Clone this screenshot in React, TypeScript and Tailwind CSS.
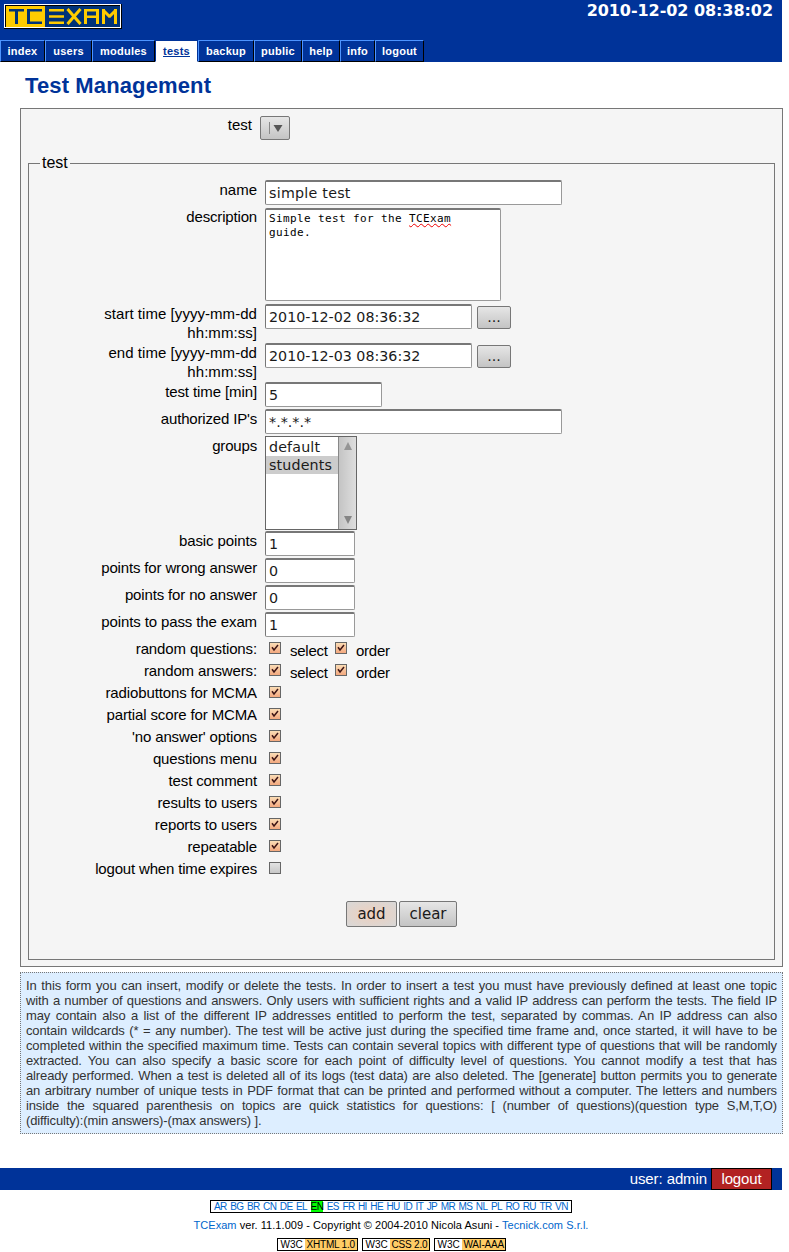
import type { ReactNode } from 'react';

const tabs = [
  { t: 'index', w: 'w-[45px]' },
  { t: 'users', w: 'w-[47px]' },
  { t: 'modules', w: 'w-[63px]' },
  { t: 'tests', w: 'w-[43px]' },
  { t: 'backup', w: 'w-[56px]' },
  { t: 'public', w: 'w-[48px]' },
  { t: 'help', w: 'w-[38px]' },
  { t: 'info', w: 'w-[35px]' },
  { t: 'logout', w: 'w-[49px]' },
];

const helpLines = [
  'In this form you can insert, modify or delete the tests. In order to insert a test you must have previously defined at least one topic',
  'with a number of questions and answers. Only users with sufficient rights and a valid IP address can perform the tests. The field IP',
  'may contain also a list of the different IP addresses entitled to perform the test, separated by commas. An IP address can also',
  'contain wildcards (* = any number). The test will be active just during the specified time frame and, once started, it will have to be',
  'completed within the specified maximum time. Tests can contain several topics with different type of questions that will be randomly',
  'extracted. You can also specify a basic score for each point of difficulty level of questions. You cannot modify a test that has',
  'already performed. When a test is deleted all of its logs (test data) are also deleted. The [generate] button permits you to generate',
  'an arbitrary number of unique tests in PDF format that can be printed and performed without a computer. The letters and numbers',
  'inside the squared parenthesis on topics are quick statistics for questions: [ (number of questions)(question type S,M,T,O)',
];

const languages = 'AR BG BR CN DE EL EN ES FR HI HE HU ID IT JP MR MS NL PL RO RU TR VN'.split(' ');

function Logo() {
  return (
    <svg width="118" height="25" viewBox="0 0 118 25" aria-label="TCExam">
      <rect width="118" height="25" fill="#000" />
      <rect width="117" height="24" fill="#fff" />
      <rect x="1" y="1" width="115" height="22" fill="#000" />
      <rect x="2" y="2" width="39" height="21" fill="#fc0" />
      <rect x="41" y="2" width="75" height="21" fill="#003278" />
      <g fill="#003278">
        <rect x="5" y="5" width="15" height="2.5" />
        <rect x="11" y="5" width="3" height="15" />
        <rect x="23" y="5" width="15" height="2.5" />
        <rect x="23" y="5" width="3" height="15" />
        <rect x="23" y="17.5" width="15" height="2.5" />
      </g>
      <g fill="#fc0">
        <rect x="45" y="5" width="15" height="2.5" />
        <rect x="45" y="11.250" width="15" height="2.5" />
        <rect x="45" y="17.5" width="15" height="2.5" />
        <rect x="80" y="5" width="15" height="2.5" />
        <rect x="80" y="5" width="3" height="15" />
        <rect x="92" y="5" width="3" height="15" />
        <rect x="80" y="11.5" width="15" height="2.5" />
        <rect x="98" y="5" width="3" height="15" />
        <rect x="110" y="5" width="3" height="15" />
      </g>
      <g stroke="#fc0" strokeWidth="3">
        <line x1="63.500" y1="5" x2="76.500" y2="20" />
        <line x1="76.500" y1="5" x2="63.500" y2="20" />
        <line x1="99" y1="6" x2="106" y2="13" />
        <line x1="112" y1="6" x2="105" y2="13" />
      </g>
    </svg>
  );
}

function Check({ on = true }: { on?: boolean }) {
  return (
    <svg width="12" height="12" viewBox="0 0 12 12" className="block shrink-0">
      <defs>
        <linearGradient id="on" x2="0" y2="1">
          <stop offset="0" stopColor="#fbdfb8" />
          <stop offset="1" stopColor="#f3a67c" />
        </linearGradient>
        <linearGradient id="off" x2="0" y2="1">
          <stop offset="0" stopColor="#e4e4e4" />
          <stop offset="1" stopColor="#c6c6c6" />
        </linearGradient>
      </defs>
      <rect x=".5" y=".5" width="11" height="11" fill={on ? 'url(#on)' : 'url(#off)'} stroke="#666" />
      {on && <polyline points="3,5.3 5,8 9,3" fill="none" stroke="#3c1414" strokeWidth="1.5" />}
    </svg>
  );
}

function Row({ label, h, tracking = 'tracking-[-0.17px]', children }: { label: ReactNode; h: string; tracking?: string; children: ReactNode }) {
  return (
    <div className={`flex gap-2 ${h}`}>
      <div className={`w-[228px] shrink-0 whitespace-nowrap text-right text-[15px] leading-[19px] ${tracking}`}>{label}</div>
      {children}
    </div>
  );
}

function Field({ value, w }: { value: string; w: string }) {
  return (
    <input
      defaultValue={value}
      className={`h-[25px] rounded-[2px] border border-[#999] border-t-2 border-t-[#777] border-l-[#777] bg-white px-[3px] font-['DejaVu_Sans',sans-serif] text-[14.25px] leading-[20px] text-[#1a1a1a] outline-none ${w}`}
    />
  );
}

function Button({ children, className }: { children: ReactNode; className: string }) {
  return (
    <button
      className={`rounded-[2px] border border-[#777] bg-linear-to-b from-[#e6e6e6] to-[#c4c4c4] font-['DejaVu_Sans',sans-serif] text-[#1a1a1a] ${className}`}
    >
      {children}
    </button>
  );
}

function CheckRow({ label, on = true, pair = false }: { label: string; on?: boolean; pair?: boolean }) {
  return (
    <Row label={label} h="h-[22px]" tracking={label.startsWith('logout') ? 'tracking-[-0.17px]' : 'tracking-[-0.13px]'}>
      <div className="flex pl-1 pt-[3px] text-[15px] leading-[17px] tracking-[-0.25px]">
        <Check on={on} />
        {pair && (
          <>
            <span className="ml-[9px] w-[45px]">select</span>
            <Check />
            <span className="ml-[9px]">order</span>
          </>
        )}
      </div>
    </Row>
  );
}

function Badge({ name, w }: { name: string; w: string }) {
  return (
    <div className={`flex h-[13px] border border-black text-[10px] leading-[12px] whitespace-nowrap ${w}`}>
      <span className="w-[27px] pl-[3px]">W3C</span>
      <span className="flex-1 bg-[#fc6] pl-[2px] tracking-[-0.2px]">{name}</span>
    </div>
  );
}

export default function App() {
  return (
    <div className="h-[1252px] w-[789px] overflow-hidden bg-white font-['Liberation_Sans',Arial,sans-serif] text-black">
      <header className="flex h-[62px] w-[782px] flex-col justify-between bg-[#039]">
        <div className="flex justify-between pl-1 pt-1">
          <Logo />
          <div className="-mt-[3px] pr-[9px] font-['DejaVu_Sans',sans-serif] text-[16px] font-bold leading-[20px] tracking-[-0.06px] text-white">
            2010-12-02 08:38:02
          </div>
        </div>
        <nav className="flex text-[11px] font-bold leading-[20px] tracking-[0.25px] text-white">
          {tabs.map(({ t, w }) => (
            <a
              key={t}
              className={`h-[22px] border text-center ${w} ${
                t === 'tests'
                  ? 'border-x-[#039] border-t-[#039] border-b-white bg-white text-[#039] underline'
                  : 'border-b-black border-l-[#4d94ff] border-r-black border-t-[#4d94ff]'
              }`}
            >
              {t}
            </a>
          ))}
        </nav>
      </header>

      <h1 className="h-[46px] pl-[25px] pt-[10px] text-[22px] font-bold leading-[27px] tracking-[0.13px] text-[#039]">Test Management</h1>

      <main className="ml-5 h-[859px] w-[763px] border border-[#777] bg-[#f5f5f5] px-[7px] pt-[6px]">
        <div className="flex h-[39px] gap-2">
          <div className="w-[224px] text-right text-[15px] leading-[19px]">test</div>
          <Button className="mt-px flex h-[24px] w-[30px] items-center pl-[8px]">
            <svg width="16" height="14">
              <path d="M.5 1v12" stroke="#888" />
              <path d="M4.500 4h9l-4.500 7z" fill="#555" />
            </svg>
          </Button>
        </div>

        <fieldset className="h-[806px] border border-[#777]">
          <legend className="ml-[11px] px-[2px] text-[16px] leading-[18px]">test</legend>
          <div className="pt-[8px]">
            <Row label="name" h="h-[27px]" tracking="tracking-normal">
              <Field value="simple test" w="w-[297px] tracking-[0.25px]" />
            </Row>
            <Row label="description" h="h-[97px]">
              <div className="mt-px h-[93px] w-[236px] rounded-[2px] border border-[#999] border-t-2 border-t-[#777] border-l-[#777] bg-white px-[3px] pt-[2px] font-['DejaVu_Sans_Mono',monospace] text-[11px] leading-[14px] tracking-[0.38px]">
                Simple test for the{' '}
                <span className="underline decoration-[#e00] decoration-wavy decoration-[1px] underline-offset-1">TCExam</span>
                <br />
                guide.
              </div>
            </Row>
            <Row label={<>start time [yyyy-mm-dd<br />hh:mm:ss]</>} h="h-[39px]" tracking="tracking-[0.05px]">
              <div className="flex gap-[5px]">
                <Field value="2010-12-02 08:36:32" w="w-[207px]" />
                <Button className="mt-[2px] h-[23px] w-[34px] text-[14.25px]">...</Button>
              </div>
            </Row>
            <Row label={<>end time [yyyy-mm-dd<br />hh:mm:ss]</>} h="h-[39px]" tracking="tracking-[0.05px]">
              <div className="flex gap-[5px]">
                <Field value="2010-12-03 08:36:32" w="w-[207px]" />
                <Button className="mt-[2px] h-[23px] w-[34px] text-[14.25px]">...</Button>
              </div>
            </Row>
            <Row label="test time [min]" h="h-[27px]" tracking="tracking-[-0.1px]">
              <Field value="5" w="w-[117px]" />
            </Row>
            <Row label="authorized IP's" h="h-[27px]">
              <Field value="*.*.*.*" w="w-[297px]" />
            </Row>
            <Row label="groups" h="h-[95px]">
              <div className="flex h-[94px] w-[92px] border border-[#666] bg-white font-['DejaVu_Sans',sans-serif] text-[14.25px] leading-[18px] tracking-[0.15px] text-[#1a1a1a]">
                <div className="w-[72px] pt-px">
                  <div className="pl-[3px]">default</div>
                  <div className="bg-[#ccc] pl-[3px]">students</div>
                </div>
                <div className="flex w-[18px] flex-col items-center justify-between border-l border-[#888] bg-linear-to-r from-[#c4c4c4] to-[#dedede] py-[5px]">
                  <svg width="8" height="8"><path d="M4 0l4 8H0z" fill="#959595" /></svg>
                  <svg width="8" height="8"><path d="M0 0h8L4 8z" fill="#858585" /></svg>
                </div>
              </div>
            </Row>
            <Row label="basic points" h="h-[27px]" tracking="tracking-[-0.1px]"><Field value="1" w="w-[90px]" /></Row>
            <Row label="points for wrong answer" h="h-[27px]" tracking="tracking-[-0.15px]"><Field value="0" w="w-[90px]" /></Row>
            <Row label="points for no answer" h="h-[27px]" tracking="tracking-[-0.15px]"><Field value="0" w="w-[90px]" /></Row>
            <Row label="points to pass the exam" h="h-[27px]" tracking="tracking-[-0.12px]"><Field value="1" w="w-[90px]" /></Row>
            <CheckRow label="random questions:" pair />
            <CheckRow label="random answers:" pair />
            <CheckRow label="radiobuttons for MCMA" />
            <CheckRow label="partial score for MCMA" />
            <CheckRow label="'no answer' options" />
            <CheckRow label="questions menu" />
            <CheckRow label="test comment" />
            <CheckRow label="results to users" />
            <CheckRow label="reports to users" />
            <CheckRow label="repeatable" />
            <CheckRow label="logout when time expires" on={false} />
            <div className="flex justify-center gap-[2px] pt-5">
              <Button className="h-[26px] w-[51px] bg-radial from-[#eecfbc] to-[#d8d8d8] text-[15px]">add</Button>
              <Button className="h-[26px] w-[58px] text-[15px]">clear</Button>
            </div>
          </div>
        </fieldset>
      </main>

      <div className="ml-5 mt-[5px] h-[162px] w-[763px] border border-dotted border-[#777] bg-[#def] px-[5px] pt-[5px] text-[13px] leading-[15px] tracking-[-0.13px] text-[#333]">
        {helpLines.map((l) => (
          <div key={l} className="whitespace-nowrap [text-align-last:justify]">{l}</div>
        ))}
        <div>(difficulty):(min answers)-(max answers) ].</div>
      </div>

      <div className="mt-[34px] flex h-[22px] w-[782px] justify-end bg-[#039] pr-[10px] text-[15px] leading-[22px] text-white">
        <span className="mr-1 tracking-[-0.1px]">user: admin</span>
        <span className="w-[61px] border border-black bg-[#b22222] text-center leading-[20px] tracking-[-0.15px]">logout</span>
      </div>

      <footer className="flex w-[782px] flex-col items-center">
        <div className="mt-[10px] flex h-[13px] w-[362px] justify-between border border-black px-[3px] text-[10px] leading-[12px] tracking-[-0.6px] text-[#06c]">
          {languages.map((l) => (
            <span key={l} className={l === 'EN' ? 'bg-[#0f0] text-black' : ''}>{l}</span>
          ))}
        </div>
        <div className="mt-[4px] text-[11px] leading-[16px] tracking-[0.05px]">
          <span className="text-[#06c]">TCExam</span> ver. 11.1.009 - Copyright © 2004-2010 Nicola Asuni -{' '}
          <span className="text-[#06c]">Tecnick.com S.r.l.</span>
        </div>
        <div className="mt-[5px] flex gap-1">
          <Badge name="XHTML 1.0" w="w-[81px]" />
          <Badge name="CSS 2.0" w="w-[68px]" />
          <Badge name="WAI-AAA" w="w-[72px]" />
        </div>
      </footer>
    </div>
  );
}
